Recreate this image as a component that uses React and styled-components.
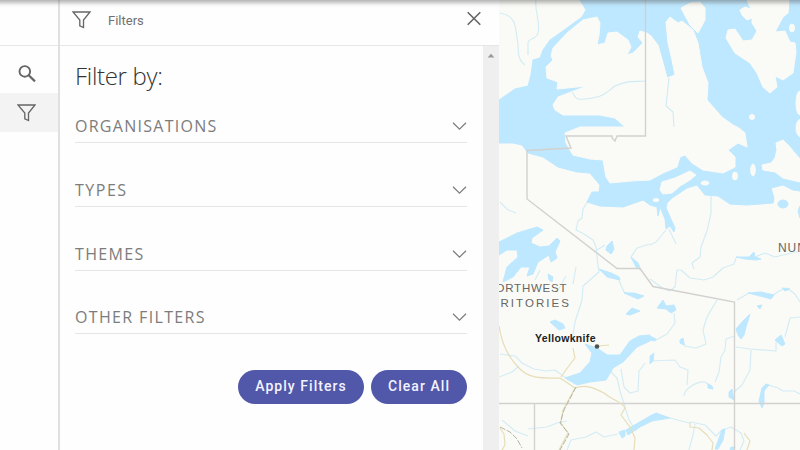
import React from "react";
import styled, { createGlobalStyle } from "styled-components";

const GlobalStyle = createGlobalStyle`
  * { box-sizing: border-box; }
  body { margin: 0; overflow: hidden; background: #fff; }
`;

const Screen = styled.div`
  position: relative;
  display: flex;
  width: 800px;
  height: 450px;
  overflow: hidden;
  background: #fefefe;
  font-family: Roboto, sans-serif;
`;

const TopShadow = styled.div`
  position: absolute;
  inset: 0 0 auto 0;
  height: 8px;
  background: linear-gradient(
    rgba(70, 70, 70, 0.4),
    rgba(90, 90, 90, 0.26) 32%,
    rgba(120, 120, 120, 0.06) 65%,
    transparent
  );
`;

const Rail = styled.nav`
  flex: none;
  display: flex;
  flex-direction: column;
  width: 60px;
  border-right: 2px solid #e0e0e0;
`;

const RailTop = styled.div`
  height: 46px;
  margin-bottom: 8px;
  border-bottom: 1px solid #e6e6e6;
`;

const RailButton = styled.button`
  display: flex;
  align-items: center;
  justify-content: center;
  width: 58px;
  height: 39px;
  padding: 0 5px 0 0;
  border: 0;
  color: #666;
  background: ${(p) => (p.$active ? "#f3f3f3" : "transparent")};
`;

const Panel = styled.section`
  flex: none;
  display: flex;
  flex-direction: column;
  width: 439px;
`;

const PanelHeader = styled.header`
  display: flex;
  align-items: flex-start;
  height: 46px;
  padding: 10px 17px 0 11.5px;
  border-bottom: 1px solid #e6e6e6;
  color: #666;
`;

const PanelTitle = styled.span`
  flex: 1;
  margin: 2px 0 0 17.5px;
  font-size: 13px;
  line-height: 18px;
  color: #707070;
`;

const CloseButton = styled.button`
  display: flex;
  padding: 0;
  margin-top: 0.5px;
  border: 0;
  background: none;
  color: #666;
`;

const PanelBody = styled.div`
  flex: 1;
  display: flex;
`;

const Content = styled.div`
  flex: 1;
  padding: 13px 16px 0 15px;
`;

const Scrollbar = styled.div`
  display: flex;
  justify-content: center;
  width: 16px;
  padding-top: 7px;
  background: #efefef;
`;

const Heading = styled.h1`
  margin: 0;
  font: 300 24px/34px "Open Sans", sans-serif;
  letter-spacing: -0.3px;
  color: #333;
`;

const FilterRow = styled.div`
  display: flex;
  align-items: flex-start;
  justify-content: space-between;
  height: 29px;
  margin: ${(p) => (p.$first ? "21.4px" : "34.6px")} 0 0;
  border-bottom: 1px solid #e5e5e5;
  color: #7c7c7c;
`;

const FilterLabel = styled.span`
  font: 400 16px/24px "Open Sans", sans-serif;
  letter-spacing: ${(p) => p.$spacing}px;
`;

const Actions = styled.div`
  display: flex;
  justify-content: flex-end;
  gap: 7px;
  margin-top: 35.5px;
`;

const PillButton = styled.button`
  width: ${(p) => p.$width}px;
  height: 34px;
  padding: 0;
  border: 0;
  border-radius: 17px;
  background: #5157a9;
  color: #f3f3ff;
  font: 500 14px/33px Roboto, sans-serif;
  letter-spacing: ${(p) => p.$spacing}px;
`;

const MapArea = styled.svg`
  flex: none;
  display: block;
  width: 301px;
  height: 450px;
`;

const SEA =
  "M580 0L586 10 582 17 567 28 550 40 543 50 540 58 533 60 531 75 528 86 515 89 499 100V143L513 143 522 145 528 153 543 157 558 167 577 172 590 173 600 185 599 192 592 192 587 202 600 206 623 207 643 200 650 205 657 207 658 216 660 207 665 219 666 229 670 226 674 232 675 228 670 217 666 208 667 203 672 198 687 188 697 185 705 195 718 196 730 204 747 205 773 203 774 198 771 188 783 185 793 190 800 191V0Z";
const MAINLAND =
  "M597 17L600 23 599 35 597 45 605 43 608 33 617 32 628 40 631 47 627 55 633 53 643 43 638 37 640 31 647 33 651 36 658 45 663 63 667 78 675 75 672 60 668 43 666 22 670 17 678 23 682 21 693 30 698 43 702 67 708 83 707 100 722 117 733 125 739 128 745 133 747 147 738 143 728 150 735 157 735 167 723 173 703 170 692 163 685 155 680 157 677 167 663 173 650 180 631 181 610 183 606 177 603 160 590 159 573 155 570 150 566 143 565 133 580 127 600 127 625 127 615 118 600 115 563 115 555 110 553 105 558 97 587 86 557 89 558 82 547 78 546 67 553 60 551 56 553 48 567 33 583 20Z";
const LANDS = [
  "M681 8L690 3 700 2 705 8 705 20 698 33 690 25Z",
  "M747 0L751 9 745 7 740 10 742 15 747 20 752 18 752 23 757 31 752 40 743 41 735 29 728 30 726 38 735 53 750 63 757 73 763 87 770 93 777 87 775 76 783 80 793 73 796 52 795 43 790 42 785 31 775 32 783 17 788 13 789 0Z",
  "M777 150L776 143 783 140 790 147 794 152 800 159V182L783 178 775 172 763 170 762 165 771 163 775 158Z",
  "M660 190L662 182 675 178 690 171 696 175 690 180 680 186 672 193 663 194Z",
];
const ISLANDS = [
  [792, 28, 2.5, 4],
  [752, 117, 2.5, 2.5],
  [800, 103, 4, 12],
  [801, 128, 5, 9],
  [735, 176, 2.5, 4],
  [753, 170, 2.3, 6],
  [705, 183, 4, 2],
  [656, 200, 3, 1.5],
];
const LAKES = [
  "M499 242L517 233 537 227 543 230 532 238 531 243 540 247 549 246 557 238 560 241 555 252 557 258 551 262 549 255 538 262 533 274 527 276 530 267 521 267 513 277 503 282 507 267 518 257 517 250 507 250 499 255Z",
  "M565 378L580 373 590 362 592 353 585 344 597 348 607 355 620 355 630 341 639 336 650 335V341L637 347 623 362 613 368 606 380 590 382 577 385Z",
  "M607 246L612 241 614 249 611 254 606 250Z",
  "M550 322L555 320 563 324 565 328 559 330Z",
  "M599 269L611 273 619 277 620 280 607 277Z",
  "M631 257L638 263 641 270 636 267Z M624 293L634 293 644 296 638 299Z",
  "M736 257L749 257 754 252 755 257 761 259 756 260 745 259Z",
  "M748 293L761 292 774 295 771 299 758 295Z M782 288L790 289 785 291Z",
  "M736 329L742 322 750 314 746 327 744 335 741 339 738 335Z",
  "M775 340L781 335 785 344 782 346Z M757 306L762 305 760 309Z",
  "M759 401L762 388 766 384 769 385 764 391 764 403 762 408Z",
  "M650 416L656 413 670 418 652 421 640 427 628 435 626 430Z",
  "M718 441L722 430 725 429 723 440 718 449 715 449Z",
  "M657 308L663 300 666 306 674 305 676 310 671 313 666 309Z",
  "M626 314L632 308 640 311 630 315Z M650 336L656 339 655 341 650 340Z",
  "M619 432L625 430 625 436 622 438Z M680 340L683 338 684 345 680 343Z",
  "M729 392L732 389 734 400 729 397Z M708 384L712 386 713 389 708 388Z",
  "M548 274L553 277 552 282 549 280Z M731 447L735 447 734 450 730 450Z",
  "M800 206L798 211 800 218Z M650 356L654 353 653 361 650 364Z",
];
const RIVERS = [
  "M500 13C518 16 515 29 518 44C518 55 519 61 525 65",
  "M536 0C534 10 541 22 538 33C537 40 527 37 528 45L528 55",
  "M572 92C577 98 574 100 585 99C605 97 607 92 615 86C628 80 634 82 646 81",
  "M669 78L666 106 673 112 674 127",
  "M711 196L711 213 707 231 701 247 700 257 692 263 694 269",
  "M588 201L583 209 582 218 578 221 576 230 584 234 593 240 596 247 598 266 599 272 591 279 583 286 582 300 575 322 573 334",
  "M500 202L508 210 516 213",
  "M605 245L597 250 M650 244L637 248 631 257 M617 276L624 292 639 297",
  "M666 230L656 242 650 245 M669 229L676 244",
  "M650 279L661 287 669 291 675 287 677 270 681 270L690 278 704 280 713 277 723 268 734 264 736 258",
  "M755 257L765 253 775 257 787 254 800 251",
  "M737 300L749 293 759 296 769 298 779 291 787 288 795 294 800 302",
  "M717 300L707 317 703 330 706 344 696 348 685 346 683 340",
  "M735 336L726 339 725 350 721 357 719 372 715 382",
  "M736 347L750 349 776 351 776 342 M751 350L750 370 742 385 734 392",
  "M785 337L790 318 800 317",
  "M674 313L675 323 667 334 656 340",
  "M650 361L675 360 680 367 688 370 687 385",
  "M684 396C684 389 697 381 705 382L711 386",
  "M765 384L778 388 783 391 794 391 800 394",
  "M500 354L515 356 522 363 534 369 546 371 555 370 566 378",
  "M499 377L512 372 519 366",
  "M610 371L617 378 620 391 624 404 629 420 636 431",
  "M621 369L624 387 630 393 638 391 639 371 645 363",
  "M528 429L547 427 557 423 567 421",
  "M567 450L571 440 586 437 596 432 604 437 618 434",
  "M670 418L689 423 691 422 705 425 716 436 722 430 731 427 741 433 744 441 740 450",
  "M695 424L693 435 689 450",
  "M502 420L515 431 528 436",
  "M540 270L535 280 M558 290L566 276 M576 267L573 284",
];
const ROADS = [
  "M499 326C502 345 508 357 518 367C529 380 545 378 560 378L575 388",
  "M598 346L609 345 M573 348L575 358 568 367 561 377",
  "M575 388C586 384 594 388 604 393C613 401 621 401 625 408L621 415 630 427 635 438 634 450",
  "M575 388L563 410 561 423 568 433 559 450",
  "M500 428L504 434 505 445 502 450 M690 423L690 427 699 428 707 435 713 443 712 450",
  "M744 433L750 441 747 450",
];

const sections = [
  ["ORGANISATIONS", 1.27],
  ["TYPES", 1.5],
  ["THEMES", 1.35],
  ["OTHER FILTERS", 1.35],
];

function FunnelIcon() {
  return (
    <svg width="19" height="20" viewBox="0 0 19 20" fill="none" stroke="currentColor" strokeWidth="1.35">
      <path d="M1 2H18L11.5 10V17.5L7.8 15.8V10Z" />
    </svg>
  );
}

function SearchIcon() {
  return (
    <svg width="20" height="20" viewBox="0 0 20 20" fill="none" stroke="currentColor" strokeWidth="1.9">
      <circle cx="7.8" cy="7.4" r="5.3" />
      <path d="M11.7 11.3L18 17.4" strokeWidth="2.2" />
    </svg>
  );
}

function CanadaMap() {
  return (
    <MapArea viewBox="499 0 301 450">
      <rect x="499" width="301" height="450" fill="#fafbf6" />
      <g fill="none" stroke="#d3ecf5" strokeWidth="1.15" strokeLinejoin="round">
        {RIVERS.map((d) => <path key={d} d={d} />)}
      </g>
      <g fill="#bee8ff" stroke="#bee8ff" strokeWidth="1" strokeLinejoin="round">
        <path d={SEA} />
        {LAKES.map((d) => <path key={d} d={d} />)}
        <ellipse cx="783" cy="204" rx="5" ry="4" />
      </g>
      <g fill="#fafbf6" stroke="#fafbf6" strokeWidth="1" strokeLinejoin="round">
        <path d={MAINLAND} />
        {LANDS.map((d) => <path key={d} d={d} />)}
        {ISLANDS.map(([x, y, rx, ry]) => <ellipse key={`${x}-${y}`} cx={x} cy={y} rx={rx} ry={ry} />)}
      </g>
      <g fill="none" stroke="#cfeaf5" strokeWidth="1.1">
        <path d={RIVERS[2]} />
        <path d={RIVERS[3]} />
      </g>
      <g fill="none" stroke="#d2d1d0" strokeWidth="1.4">
        <path d="M645.5 0V136H617L615 141 612 138V136H566L571 148 527 150.5V199L617 268.5H640L653 286.5 734.5 302V450" />
        <path d="M499 403.5H800M534.5 403V450" />
      </g>
      <g fill="none" stroke="#e6ddb8" strokeWidth="1.2" strokeLinejoin="round">
        {ROADS.map((d) => <path key={d} d={d} />)}
      </g>
      <g fill="none" stroke="#b8b4a4" strokeWidth="1" strokeDasharray="6 1.5">
        <path d="M576 387L564 410 560 423 569 434 560 450M500 427L510 432 517 439 522 448" />
      </g>
      <circle cx="597" cy="346.5" r="2.3" fill="#4d5550" />
      <g fontFamily="Liberation Sans, Arial, sans-serif">
        <g fontSize="11.5" fill="#666" stroke="#fafbf6" strokeWidth="1.5" paintOrder="stroke">
          <text x="495.5" y="291.5" textLength="71" lengthAdjust="spacing">ORTHWEST</text>
          <text x="490" y="306.5" textLength="79" lengthAdjust="spacing">RRITORIES</text>
          <text x="778" y="252" fontSize="12" letterSpacing="0.9">NUN</text>
        </g>
        <text x="535" y="342" fontSize="10.5" fontWeight="700" fill="#222" textLength="60.5">Yellowknife</text>
      </g>
    </MapArea>
  );
}

export default function App() {
  return (
    <Screen>
      <GlobalStyle />
      <Rail>
        <RailTop />
        <RailButton aria-label="Search"><SearchIcon /></RailButton>
        <RailButton $active aria-label="Filters"><FunnelIcon /></RailButton>
      </Rail>
      <Panel>
        <PanelHeader>
          <FunnelIcon />
          <PanelTitle>Filters</PanelTitle>
          <CloseButton aria-label="Close">
            <svg width="16" height="16" viewBox="0 0 16 16" stroke="currentColor" strokeWidth="1.6">
              <path d="M1.7 1.2L14.3 13.8M14.3 1.2L1.7 13.8" />
            </svg>
          </CloseButton>
        </PanelHeader>
        <PanelBody>
          <Content>
            <Heading>Filter by:</Heading>
            {sections.map(([label, spacing], i) => (
              <FilterRow key={label} $first={i === 0}>
                <FilterLabel $spacing={spacing}>{label}</FilterLabel>
                <svg width="15" height="24" viewBox="0 0 15 24" fill="none" stroke="currentColor" strokeWidth="1.2">
                  <path d="M1 8.8L7.5 15.1L14 8.8" />
                </svg>
              </FilterRow>
            ))}
            <Actions>
              <PillButton $width={126} $spacing={1.05}>Apply Filters</PillButton>
              <PillButton $width={96} $spacing={1.05}>Clear All</PillButton>
            </Actions>
          </Content>
          <Scrollbar>
            <svg width="8" height="5" viewBox="0 0 8 5"><path d="M.7 4.5L4 .7 7.3 4.5Z" fill="#999" /></svg>
          </Scrollbar>
        </PanelBody>
      </Panel>
      <CanadaMap />
      <TopShadow />
    </Screen>
  );
}
